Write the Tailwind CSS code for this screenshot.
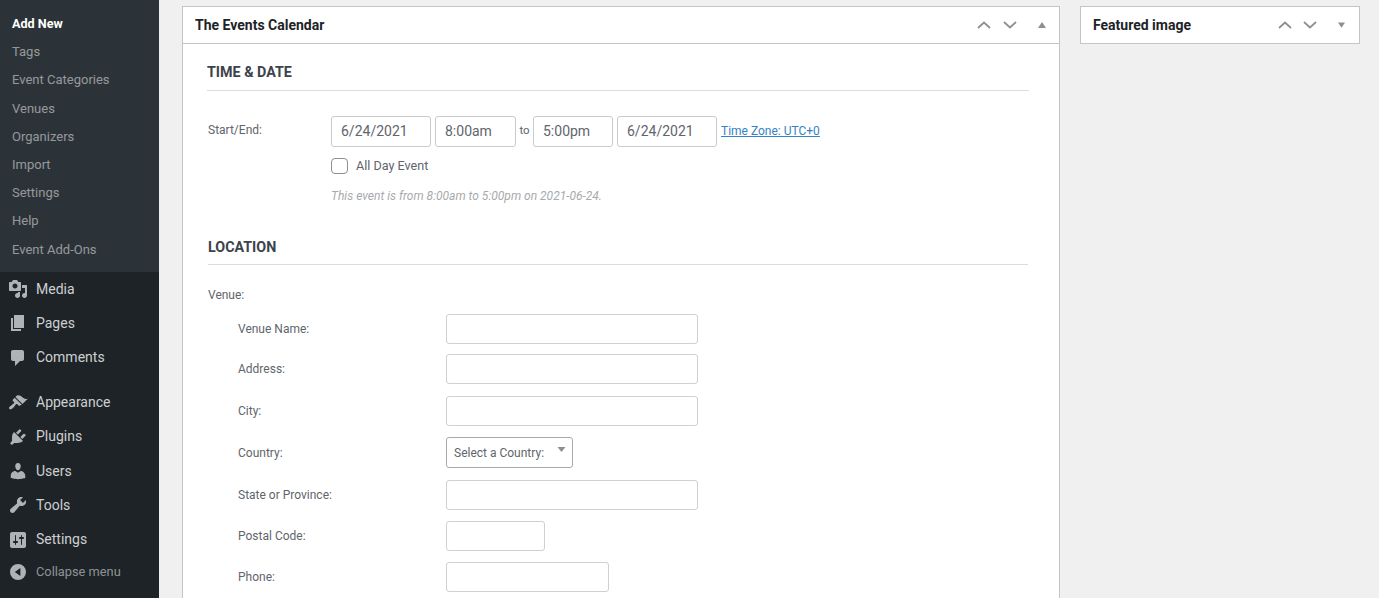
<!DOCTYPE html>
<html>
<head>
<meta charset="utf-8">
<script src="https://cdn.jsdelivr.net/npm/@tailwindcss/browser@4"></script>
</head>
<body class="bg-[#f0f0f1] font-['Roboto',sans-serif] overflow-hidden">
<div class="flex h-[598px] w-[1379px] overflow-hidden">
  <aside class="w-[159px] h-[598px] shrink-0 bg-[#1d2327] text-[#f0f0f1]">
    <ul class="bg-[#2c3338] h-[272px] pt-[10px] text-[13px] text-[#f0f0f1]/55">
      <li class="h-[28.2px] leading-[28px] pl-[12px] font-bold text-white text-[12.6px]">Add New</li>
      <li class="h-[28.2px] leading-[28px] pl-[12px]">Tags</li>
      <li class="h-[28.2px] leading-[28px] pl-[12px]">Event Categories</li>
      <li class="h-[28.2px] leading-[28px] pl-[12px]">Venues</li>
      <li class="h-[28.2px] leading-[28px] pl-[12px]">Organizers</li>
      <li class="h-[28.2px] leading-[28px] pl-[12px]">Import</li>
      <li class="h-[28.2px] leading-[28px] pl-[12px]">Settings</li>
      <li class="h-[28.2px] leading-[28px] pl-[12px]">Help</li>
      <li class="h-[28.2px] leading-[28px] pl-[12px]">Event Add-Ons</li>
    </ul>
    <ul class="text-[14px] text-[#f0f0f1]/85">
      <li class="h-[34.3px] flex items-center">
        <svg class="w-[20px] h-[20px] ml-[8px] mr-[8px] text-[#b0b3b6]" viewBox="0 0 20 20" fill="currentColor"><path d="M13 11V4c0-.55-.45-1-1-1h-1.67L9 1H5L3.67 3H2c-.55 0-1 .45-1 1v7c0 .55.45 1 1 1h10c.55 0 1-.45 1-1zM7 4.5c1.38 0 2.5 1.12 2.5 2.5S8.38 9.5 7 9.5 4.5 8.38 4.5 7 5.62 4.5 7 4.500zM14 6h5v10.500c0 1.380-1.120 2.500-2.500 2.500S14 17.880 14 16.500s1.120-2.500 2.500-2.500c.17 0 .34.020.5.050V9h-3V6zm-4 8.050V13h2v3.500c0 1.380-1.120 2.500-2.500 2.500S7 17.880 7 16.500 8.120 14 9.500 14c.17 0 .34.020.5.050z"/></svg>
        <span>Media</span>
      </li>
      <li class="h-[34.3px] flex items-center">
        <svg class="w-[20px] h-[20px] ml-[8px] mr-[8px] text-[#b0b3b6]" viewBox="0 0 20 20" fill="currentColor"><path d="M6 15V2h10v13H6zm-1 1h8v2H3V5h2v11z"/></svg>
        <span>Pages</span>
      </li>
      <li class="h-[34.3px] flex items-center">
        <svg class="w-[20px] h-[20px] ml-[8px] mr-[8px] text-[#b0b3b6]" viewBox="0 0 20 20" fill="currentColor"><path d="M5 2h9c1.100 0 2 .9 2 2v7c0 1.100-.9 2-2 2h-2l-5 5v-5H5c-1.100 0-2-.9-2-2V4c0-1.100.9-2 2-2z"/></svg>
        <span>Comments</span>
      </li>
      <li class="h-[34.3px] flex items-center mt-[10.5px]">
        <svg class="w-[20px] h-[20px] ml-[8px] mr-[8px] text-[#b0b3b6]" viewBox="0 0 20 20" fill="currentColor"><path d="M14.480 11.060L7.410 3.990l1.500-1.500c.5-.56 2.300-.47 3.510.32 1.210.8 1.430 1.280 2.910 2.100 1.180.64 2.450 1.260 4.450.85zm-.71.71L6.700 4.700 4.930 6.470c-.39.39-.39 1.020 0 1.410l1.060 1.060c.39.39.39 1.030 0 1.420-.6.6-1.430 1.110-2.210 1.690-.35.26-.7.53-1.010.84C1.430 13.230.4 14.950 1.400 15.950c1 1 2.720-.03 4.070-1.370.31-.31.58-.66.85-1.020.57-.78 1.080-1.610 1.690-2.210.39-.39 1.020-.39 1.410 0l1.060 1.060c.39.39 1.020.39 1.410 0z"/></svg>
        <span>Appearance</span>
      </li>
      <li class="h-[34.3px] flex items-center">
        <svg class="w-[20px] h-[20px] ml-[8px] mr-[8px] text-[#b0b3b6]" viewBox="0 0 20 20" fill="currentColor"><path d="M13.110 4.360L9.870 7.600 8 5.730l3.240-3.240c.35-.34 1.050-.2 1.560.32.52.51.66 1.210.31 1.550zm-8 1.770l.91-1.120 9.010 9.010-1.190.84c-.71.71-2.630 1.160-3.820 1.160H6.140L4.900 17.260c-.59.59-1.540.59-2.120 0a1.490 1.490 0 0 1 0-2.120l1.240-1.240v-3.880c0-1.130.4-3.190 1.090-3.890zm7.260 3.970l3.240-3.240c.34-.35 1.040-.21 1.550.31.52.51.66 1.210.31 1.550l-3.240 3.250z"/></svg>
        <span>Plugins</span>
      </li>
      <li class="h-[34.3px] flex items-center">
        <svg class="w-[20px] h-[20px] ml-[8px] mr-[8px] text-[#b0b3b6]" viewBox="0 0 20 20" fill="currentColor"><path d="M10 9.250c-2.270 0-2.730-3.440-2.730-3.440C7 4.020 7.820 2 9.970 2c2.160 0 2.980 2.020 2.710 3.810 0 0-.41 3.440-2.680 3.440zm0 2.570L12.720 10c2.390 0 4.520 2.330 4.520 4.530v2.490s-3.650 1.130-7.240 1.130c-3.650 0-7.240-1.130-7.240-1.130v-2.490c0-2.250 1.940-4.480 4.470-4.480z"/></svg>
        <span>Users</span>
      </li>
      <li class="h-[34.3px] flex items-center">
        <svg class="w-[20px] h-[20px] ml-[8px] mr-[8px] text-[#b0b3b6]" viewBox="0 0 20 20" fill="currentColor"><path d="M16.680 9.770c-1.340 1.340-3.300 1.670-4.950.99l-5.410 6.520c-.99.99-2.590.99-3.580 0s-.99-2.590 0-3.570l6.520-5.420c-.68-1.650-.35-3.610.99-4.950 1.280-1.280 3.120-1.620 4.710-1.050l-2.830 2.830 2.830 2.830 2.830-2.830c.57 1.590.23 3.430-1.050 4.710z"/></svg>
        <span>Tools</span>
      </li>
      <li class="h-[34.3px] flex items-center">
        <svg class="w-[20px] h-[20px] ml-[8px] mr-[8px] text-[#b0b3b6]" viewBox="0 0 20 20" fill="currentColor"><path d="M18 16V4c0-1.100-.9-2-2-2H4c-1.100 0-2 .9-2 2v12c0 1.100.9 2 2 2h12c1.100 0 2-.9 2-2zM8 11h1c.55 0 1 .45 1 1s-.45 1-1 1H8v1.500c0 .28-.22.5-.5.5s-.5-.22-.5-.5V13H6c-.55 0-1-.45-1-1s.45-1 1-1h1V5.500c0-.28.22-.5.5-.5s.5.22.5.5V11zm5-2h-1c-.55 0-1-.45-1-1s.45-1 1-1h1V5.500c0-.28.22-.5.5-.5s.5.22.5.5V7h1c.55 0 1 .45 1 1s-.45 1-1 1h-1v5.500c0 .28-.22.5-.5.5s-.5-.22-.5-.5V9z"/></svg>
        <span>Settings</span>
      </li>
      <li class="h-[30px] flex items-center text-[#f0f0f1]/55 text-[12.8px]">
        <svg class="w-[16px] h-[16px] ml-[10px] mr-[10px] text-[#b0b3b6]" viewBox="0 0 20 20" fill="currentColor" fill-rule="evenodd"><path d="M10 0a10 10 0 1 1 0 20 10 10 0 0 1 0-20zM13 5L6 10l7 5z"/></svg>
        <span>Collapse menu</span>
      </li>
    </ul>
  </aside>

  <main class="flex items-start gap-[20px] pl-[23px] pt-[6px]">
    <section class="w-[878px] h-[640px] shrink-0 bg-white border border-[#c3c4c7]">
      <header class="h-[37px] border-b border-[#c3c4c7] flex items-center pl-[12px] pr-[12px]">
        <h2 class="text-[14px] font-bold text-[#1d2327] grow">The Events Calendar</h2>
        <svg class="w-[14px] h-[8px] mr-[12px] text-[#8c8f94]" viewBox="0 0 14 8" fill="none" stroke="currentColor" stroke-width="1.700"><path d="M1 7l6-5.500L13 7"/></svg>
        <svg class="w-[14px] h-[8px] mr-[21px] text-[#8c8f94]" viewBox="0 0 14 8" fill="none" stroke="currentColor" stroke-width="1.700"><path d="M1 1l6 5.500L13 1"/></svg>
        <svg class="w-[8px] h-[6px] mr-[1px] text-[#8c8f94]" viewBox="0 0 8 6" fill="currentColor"><path d="M4 0l4 6H0z"/></svg>
      </header>

      <div class="ml-[24px] mr-[30px] mt-[18px] h-[29px] border-b border-[#dcdcde] text-[14.3px] leading-[20px] font-bold text-[#3c434a] uppercase">Time &amp; Date</div>

      <div class="flex items-center mt-[25px] h-[31px] text-[#5f656b]">
        <span class="w-[148px] pl-[25px] pb-[4px] text-[12px] shrink-0">Start/End:</span>
        <div class="w-[100px] h-[31px] mr-[4px] border border-[#c9cacc] rounded-[3px] pl-[9px] leading-[29px] text-[14px]">6/24/2021</div>
        <div class="w-[81px] h-[31px] border border-[#c9cacc] rounded-[3px] pl-[9px] leading-[29px] text-[14px]">8:00am</div>
        <span class="w-[17px] pb-[2px] text-center text-[11.5px]">to</span>
        <div class="w-[80px] h-[31px] mr-[4px] border border-[#c9cacc] rounded-[3px] pl-[9px] leading-[29px] text-[14px]">5:00pm</div>
        <div class="w-[100px] h-[31px] mr-[4px] border border-[#c9cacc] rounded-[3px] pl-[9px] leading-[29px] text-[14px]">6/24/2021</div>
        <a class="mb-[2px] text-[12px] text-[#3582c4] underline">Time Zone: UTC+0</a>
      </div>

      <div class="flex items-center mt-[11px] h-[16px] pl-[148px] text-[#5f656b]">
        <span class="w-[17px] h-[16px] mr-[8px] border border-[#8c8f94] rounded-[4px] shrink-0"></span>
        <span class="text-[12.6px]">All Day Event</span>
      </div>

      <p class="mt-[14px] h-[16px] leading-[16px] pl-[148px] text-[12px] italic text-[#a7aaad]">This event is from 8:00am to 5:00pm on 2021-06-24.</p>

      <div class="ml-[25px] mr-[31px] mt-[33px] h-[28px] border-b border-[#dcdcde] text-[14.3px] leading-[20px] font-bold text-[#3c434a] uppercase">Location</div>

      <p class="mt-[22px] h-[16px] leading-[16px] pl-[25px] text-[12px] text-[#5f656b]">Venue:</p>

      <div class="flex items-center mt-[11px] h-[30px]">
        <span class="w-[263px] pl-[55px] text-[12px] text-[#5f656b] shrink-0">Venue Name:</span>
        <div class="w-[252px] h-[30px] border border-[#cfd0d2] rounded-[3px]"></div>
      </div>
      <div class="flex items-center mt-[10px] h-[30px]">
        <span class="w-[263px] pl-[55px] text-[12px] text-[#5f656b] shrink-0">Address:</span>
        <div class="w-[252px] h-[30px] border border-[#cfd0d2] rounded-[3px]"></div>
      </div>
      <div class="flex items-center mt-[12px] h-[30px]">
        <span class="w-[263px] pl-[55px] text-[12px] text-[#5f656b] shrink-0">City:</span>
        <div class="w-[252px] h-[30px] border border-[#cfd0d2] rounded-[3px]"></div>
      </div>
      <div class="flex items-center mt-[11px] h-[31px]">
        <span class="w-[263px] pl-[55px] text-[12px] text-[#5f656b] shrink-0">Country:</span>
        <div class="relative w-[127px] h-[31px] border border-[#a7aaad] rounded-[3px] pl-[7px] leading-[30px] text-[12px] text-[#5f656b]">
          Select a Country:
          <svg class="absolute right-[6px] top-[9px] w-[9px] h-[5px] text-[#8c8f94]" viewBox="0 0 8 5" fill="currentColor"><path d="M0 0h8L4 5z"/></svg>
        </div>
      </div>
      <div class="flex items-center mt-[12px] h-[30px]">
        <span class="w-[263px] pl-[55px] text-[12px] text-[#5f656b] shrink-0">State or Province:</span>
        <div class="w-[252px] h-[30px] border border-[#cfd0d2] rounded-[3px]"></div>
      </div>
      <div class="flex items-center mt-[11px] h-[30px]">
        <span class="w-[263px] pl-[55px] text-[12px] text-[#5f656b] shrink-0">Postal Code:</span>
        <div class="w-[99px] h-[30px] border border-[#cfd0d2] rounded-[3px]"></div>
      </div>
      <div class="flex items-center mt-[11px] h-[30px]">
        <span class="w-[263px] pl-[55px] text-[12px] text-[#5f656b] shrink-0">Phone:</span>
        <div class="w-[163px] h-[30px] border border-[#cfd0d2] rounded-[3px]"></div>
      </div>
    </section>

    <section class="w-[280px] h-[38px] shrink-0 bg-white border border-[#c3c4c7] flex items-center pl-[12px] pr-[14px]">
      <h2 class="text-[14px] font-bold text-[#1d2327] grow">Featured image</h2>
      <svg class="w-[14px] h-[8px] mr-[11px] text-[#8c8f94]" viewBox="0 0 14 8" fill="none" stroke="currentColor" stroke-width="1.700"><path d="M1 7l6-5.500L13 7"/></svg>
      <svg class="w-[14px] h-[8px] mr-[21px] text-[#8c8f94]" viewBox="0 0 14 8" fill="none" stroke="currentColor" stroke-width="1.700"><path d="M1 1l6 5.500L13 1"/></svg>
      <svg class="w-[7px] h-[6px] text-[#8c8f94]" viewBox="0 0 8 6" fill="currentColor"><path d="M0 0h8L4 6z"/></svg>
    </section>
  </main>
</div>
</body>
</html>
